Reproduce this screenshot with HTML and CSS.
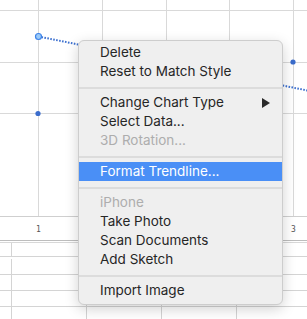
FILE: index.html
```html
<!DOCTYPE html>
<html lang="en">
<head>
    <meta charset="UTF-8">
    <title>Chart Context Menu</title>
    <link rel="stylesheet" href="styles.css">
</head>
<body>
    <div class="page">
        <svg class="chart" width="307" height="240" viewBox="0 0 307 240">
            <g class="grid">
                <line x1="0" y1="10.5" x2="307" y2="10.5"/>
                <line x1="0" y1="62.5" x2="307" y2="62.5"/>
                <line x1="0" y1="113.5" x2="307" y2="113.5"/>
                <line x1="38.5" y1="0" x2="38.5" y2="216"/>
                <line x1="102.5" y1="0" x2="102.5" y2="216"/>
                <line x1="166.5" y1="0" x2="166.5" y2="216"/>
                <line x1="229.5" y1="0" x2="229.5" y2="216"/>
                <line x1="293.5" y1="0" x2="293.5" y2="216"/>
            </g>
            <line class="axis" x1="0" y1="216.5" x2="307" y2="216.5"/>
            <line class="trend" x1="38.5" y1="36.5" x2="310" y2="91"/>
            <circle class="point" cx="38" cy="113.5" r="2.6"/>
            <circle class="point" cx="293" cy="62" r="2.6"/>
            <circle class="point selected" cx="38.5" cy="36.5" r="3"/>
            <text class="tick" x="38.5" y="232">1</text>
            <text class="tick" x="293.5" y="232">3</text>
        </svg>

        <div class="sheet">
            <div class="sheet-grid">
                <div class="cell head"></div><div class="cell head"></div><div class="cell head"></div><div class="cell head"></div><div class="cell head"></div>
                <div class="cell"></div><div class="cell"></div><div class="cell"></div><div class="cell"></div><div class="cell"></div>
                <div class="cell"></div><div class="cell"></div><div class="cell"></div><div class="cell"></div><div class="cell"></div>
                <div class="cell"></div><div class="cell"></div><div class="cell"></div><div class="cell"></div><div class="cell"></div>
                <div class="cell"></div><div class="cell"></div><div class="cell"></div><div class="cell"></div><div class="cell"></div>
            </div>
        </div>

        <div class="menu">
            <div class="menu-item">Delete</div>
            <div class="menu-item">Reset to Match Style</div>
            <div class="menu-sep"></div>
            <div class="menu-item has-sub">Change Chart Type <span class="sub-arrow"></span></div>
            <div class="menu-item">Select Data...</div>
            <div class="menu-item disabled">3D Rotation...</div>
            <div class="menu-sep"></div>
            <div class="menu-item active">Format Trendline...</div>
            <div class="menu-sep"></div>
            <div class="menu-item disabled">iPhone</div>
            <div class="menu-item">Take Photo</div>
            <div class="menu-item">Scan Documents</div>
            <div class="menu-item">Add Sketch</div>
            <div class="menu-sep"></div>
            <div class="menu-item">Import Image</div>
        </div>
    </div>
</body>
</html>
```

FILE: styles.css
```css
body {
    margin: 0;
    background: #ffffff;
    font-family: 'Inter', 'Liberation Sans', sans-serif;
}

.page {
    position: relative;
    width: 307px;
    height: 319px;
    overflow: hidden;
}

.chart {
    display: block;
}

.grid line {
    stroke: #d9d9d9;
    stroke-width: 1;
}

.axis {
    stroke: #cfcfcf;
    stroke-width: 1;
}

.trend {
    stroke: #3f72d0;
    stroke-width: 2;
    stroke-dasharray: 1.6 1.4;
}

.point {
    fill: #3a6ccc;
}

.point.selected {
    fill: #9ccbf8;
    stroke: #3f84e8;
    stroke-width: 1.2;
}

.tick {
    font-family: 'DejaVu Sans Mono', monospace;
    font-size: 8px;
    fill: #555555;
    text-anchor: middle;
}

.sheet {
    border-top: 1px solid #bdbdbd;
    padding-top: 1px;
}

.sheet-grid {
    display: grid;
    grid-template-columns: 12px 75px 75px 75px 75px;
    grid-auto-rows: 16px;
    border-top: 1px solid #d8d8d8;
}

.cell {
    box-sizing: border-box;
    border-right: 1px solid #d4d4d4;
    border-bottom: 1px solid #d4d4d4;
}

.cell.head {
    height: 14px;
}

.menu {
    position: absolute;
    left: 78px;
    top: 40px;
    width: 205px;
    box-sizing: border-box;
    padding: 2px 0 4px;
    background: #efefef;
    border: 1px solid #cdcdcd;
    border-radius: 6px;
    box-shadow: 0 4px 14px rgba(0, 0, 0, 0.18);
    font-size: 13.5px;
    color: #262626;
}

.menu-item {
    height: 19px;
    line-height: 19px;
    padding: 0 12px 0 21px;
    display: flex;
    align-items: center;
    justify-content: space-between;
    white-space: nowrap;
}

.menu-item.disabled {
    color: #adadad;
}

.menu-item.active {
    background: #4a8ff6;
    color: #ffffff;
}

.menu-sep {
    height: 2px;
    margin: 6px 0 4px;
    background: #dcdcdc;
}

.sub-arrow {
    width: 0;
    height: 0;
    border-top: 5px solid transparent;
    border-bottom: 5px solid transparent;
    border-left: 8px solid #2a2a2a;
}
```
